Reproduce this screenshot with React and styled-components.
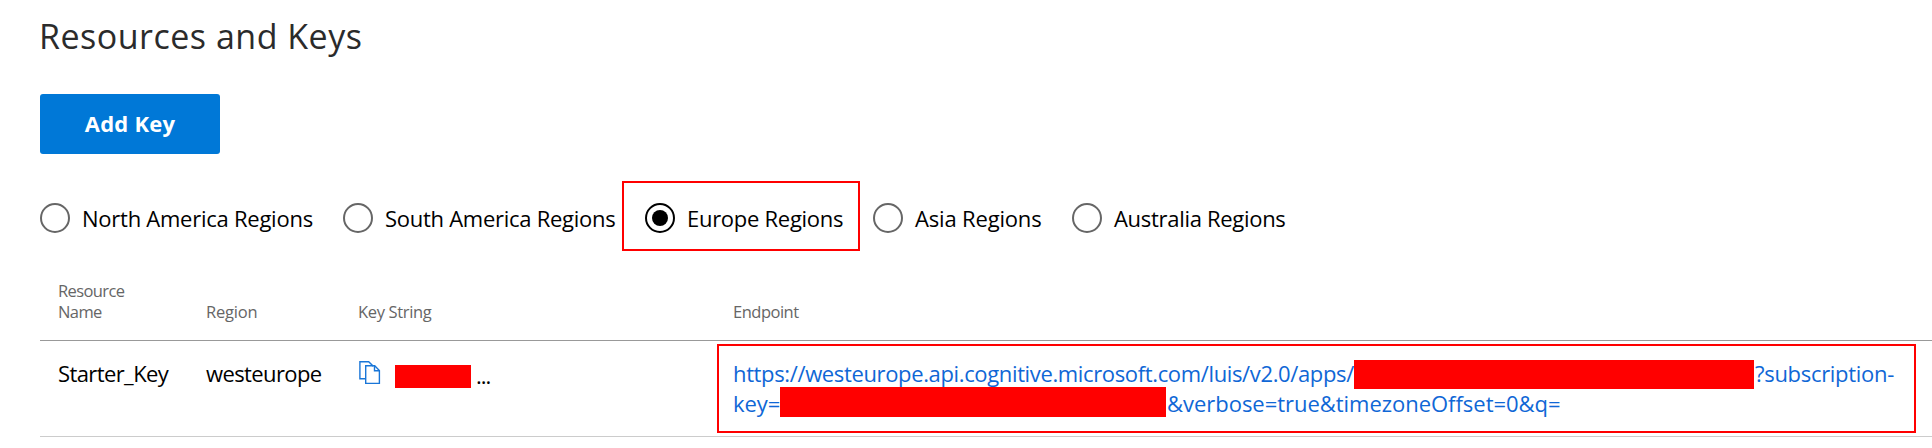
import React from "react";
import styled, { createGlobalStyle, css } from "styled-components";

const GlobalStyle = createGlobalStyle`
  * { box-sizing: border-box; }
  body {
    margin: 0;
    background: #fff;
    color: #000;
    font-family: "Open Sans", "Noto Sans", sans-serif;
  }
`;

const Page = styled.main`
  display: flex;
  flex-direction: column;
  align-items: flex-start;
  width: 1932px;
  height: 448px;
  padding: 12px 0 0 40px;
  overflow: hidden;
`;

const Title = styled.h1`
  margin: 0 0 34px -1px;
  font-size: 34px;
  line-height: 48px;
  font-weight: 380;
  letter-spacing: 0.5px;
  color: #2b2b2b;
`;

const PrimaryButton = styled.button`
  width: 180px;
  height: 60px;
  padding: 0 0 2px;
  border: 0;
  border-radius: 3px;
  background: #0078d7;
  color: #fff;
  font: 700 22px/58px "Open Sans", "Noto Sans", sans-serif;
  letter-spacing: 0.2px;
`;

const RegionList = styled.div`
  display: flex;
  align-items: stretch;
  height: 70px;
  margin-top: 27px;
`;

const RegionOption = styled.label`
  display: flex;
  align-items: flex-start;
  gap: 12px;
  width: ${(p) => p.$width}px;
  padding-top: 22px;
  ${(p) =>
    p.$outlined &&
    css`
      margin-right: 13px;
      padding: 20px 0 0 21px;
      border: 2px solid #f00;
    `}
`;

const RadioDot = styled.span`
  display: flex;
  align-items: center;
  justify-content: center;
  flex: none;
  width: 30px;
  height: 30px;
  border: 2px solid ${(p) => (p.$checked ? "#000" : "#666")};
  border-radius: 50%;
  &::after {
    content: "";
    width: 16px;
    height: 16px;
    border-radius: 50%;
    background: ${(p) => (p.$checked ? "#000" : "transparent")};
  }
`;

const RegionLabel = styled.span`
  font-size: 22px;
  line-height: 30px;
  letter-spacing: ${(p) => p.$spacing}px;
  white-space: nowrap;
`;

const Table = styled.section`
  width: 100%;
  margin-top: 29px;
`;

const gridColumns = css`
  display: grid;
  grid-template-columns: 166px 151px 360px 1199px;
`;

const HeaderRow = styled.div`
  ${gridColumns}
  align-items: end;
  height: 61px;
  padding-bottom: 18px;
  border-bottom: 1px solid #999;
`;

const HeaderCell = styled.div`
  width: ${(p) => (p.$wrap ? "100px" : "auto")};
  padding-left: ${(p) => p.$indent || 0}px;
  color: #666;
  font-size: 16.5px;
  line-height: 21px;
  letter-spacing: ${(p) => p.$spacing}px;
`;

const DataRow = styled.div`
  ${gridColumns}
  height: 96px;
  padding: 3px 0;
  border-bottom: 1px solid #ccc;
`;

const Cell = styled.div`
  padding: 14px 0 0 ${(p) => p.$indent || 0}px;
  font-size: 22px;
  line-height: 30px;
  letter-spacing: -0.6px;
`;

const KeyCell = styled(Cell)`
  display: flex;
  align-items: flex-start;
  padding-left: 2px;
`;

const CopyIcon = styled.svg`
  flex: none;
  width: 22px;
  height: 24px;
  margin: 3px 14px 0 0;
  fill: none;
  stroke: #1976d8;
  stroke-width: 1.4;
`;

const Redaction = styled.span`
  flex: none;
  width: ${(p) => p.$width}px;
  height: ${(p) => p.$height}px;
  margin: ${(p) => p.$top}px ${(p) => p.$after || 1}px 0 0;
  background: #f00;
`;

const Ellipsis = styled.span`
  margin-top: 2px;
  letter-spacing: -1px;
`;

const EndpointBox = styled.div`
  height: 89px;
  padding: 12px 0 0 14px;
  border: 2px solid #f00;
`;

const EndpointLine = styled.div`
  display: flex;
  height: 30px;
  color: #0f67d6;
  font-size: 22px;
  line-height: 30px;
  white-space: nowrap;
`;

const LinkText = styled.span`
  flex: none;
  width: ${(p) => (p.$width ? `${p.$width}px` : "auto")};
  letter-spacing: ${(p) => p.$spacing}px;
`;

const regions = [
  { name: "North America Regions", width: 303, spacing: -0.25 },
  { name: "South America Regions", width: 279, spacing: -0.27 },
  { name: "Europe Regions", width: 238, spacing: -0.28, checked: true },
  { name: "Asia Regions", width: 199, spacing: -0.17 },
  { name: "Australia Regions", width: 240, spacing: -0.3 },
];

export default function App() {
  return (
    <>
      <GlobalStyle />
      <Page>
        <Title>Resources and Keys</Title>
        <PrimaryButton type="button">Add Key</PrimaryButton>
        <RegionList role="radiogroup">
          {regions.map((r) => (
            <RegionOption key={r.name} $width={r.width} $outlined={r.checked}>
              <RadioDot role="radio" aria-checked={!!r.checked} $checked={r.checked} />
              <RegionLabel $spacing={r.spacing}>{r.name}</RegionLabel>
            </RegionOption>
          ))}
        </RegionList>
        <Table>
          <HeaderRow>
            <HeaderCell $wrap $indent={18} $spacing={-0.6}>Resource Name</HeaderCell>
            <HeaderCell $spacing={-0.2}>Region</HeaderCell>
            <HeaderCell $indent={1} $spacing={-0.35}>Key String</HeaderCell>
            <HeaderCell $indent={16} $spacing={-0.5}>Endpoint</HeaderCell>
          </HeaderRow>
          <DataRow>
            <Cell $indent={18}>Starter_Key</Cell>
            <Cell>westeurope</Cell>
            <KeyCell>
              <CopyIcon viewBox="0 0 22 24">
                <path d="M6.5 17.8H.9V.7h8.8l4.6 4.6" />
                <path d="M6.7 4.8h9l4.7 4.8v12.8H6.7z" />
                <path d="M15.5 4.8v4.9h4.9" />
              </CopyIcon>
              <Redaction $width={76} $height={23} $top={7} $after={5} />
              <Ellipsis>...</Ellipsis>
            </KeyCell>
            <EndpointBox>
              <EndpointLine>
                <LinkText $width={621} $spacing={-0.36}>
                  https://westeurope.api.cognitive.microsoft.com/luis/v2.0/apps/
                </LinkText>
                <Redaction $width={400} $height={29} $top={2} />
                <LinkText $spacing={-0.3}>?subscription-</LinkText>
              </EndpointLine>
              <EndpointLine>
                <LinkText $width={47} $spacing={-0.1}>key=</LinkText>
                <Redaction $width={386} $height={30} $top={-1} />
                <LinkText $spacing={-0.03}>&amp;verbose=true&amp;timezoneOffset=0&amp;q=</LinkText>
              </EndpointLine>
            </EndpointBox>
          </DataRow>
        </Table>
      </Page>
    </>
  );
}
